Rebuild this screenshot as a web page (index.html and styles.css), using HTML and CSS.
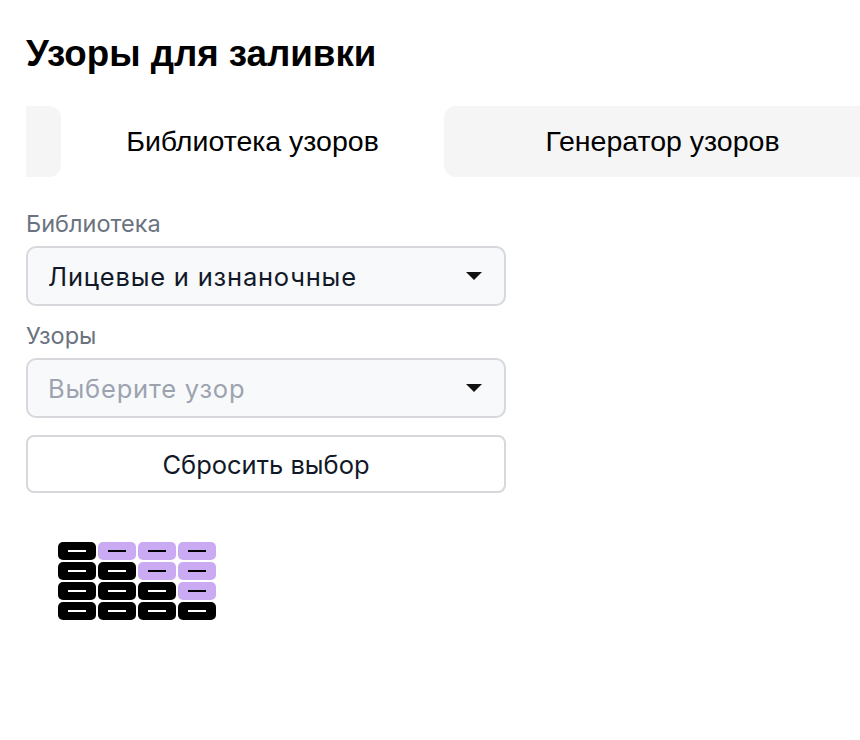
FILE: index.html
```html
<!DOCTYPE html>
<html lang="ru">
<head>
<meta charset="utf-8">
<title>Узоры для заливки</title>
<link rel="stylesheet" href="styles.css">
</head>
<body>
<div class="page">
  <h1 class="title">Узоры для заливки</h1>
  <div class="tabs">
    <div class="tab-spacer"></div>
    <div class="tab tab-active">Библиотека узоров</div>
    <div class="tab tab-inactive">Генератор узоров</div>
  </div>
  <div class="form">
    <div class="field">
      <div class="label">Библиотека</div>
      <div class="select">
        <span class="select-value">Лицевые и изнаночные</span>
        <span class="caret"></span>
      </div>
    </div>
    <div class="field">
      <div class="label">Узоры</div>
      <div class="select">
        <span class="select-value placeholder">Выберите узор</span>
        <span class="caret"></span>
      </div>
    </div>
    <button class="reset">Сбросить выбор</button>
  </div>
  <div class="pattern">
    <div class="cell k"></div><div class="cell p"></div><div class="cell p"></div><div class="cell p"></div>
    <div class="cell k"></div><div class="cell k"></div><div class="cell p"></div><div class="cell p"></div>
    <div class="cell k"></div><div class="cell k"></div><div class="cell k"></div><div class="cell p"></div>
    <div class="cell k"></div><div class="cell k"></div><div class="cell k"></div><div class="cell k"></div>
  </div>
</div>
</body>
</html>
```

FILE: styles.css
```css
html, body {
  margin: 0;
  padding: 0;
  background: #ffffff;
  overflow: hidden;
}
body {
  font-family: "Liberation Sans", Arial, sans-serif;
  color: #000;
}
.page {
  padding: 32px 0 0 26px;
}
.title {
  margin: 0;
  font-size: 36.7px;
  line-height: 44px;
  font-weight: bold;
  color: #000;
}
.tabs {
  margin-top: 30px;
  display: flex;
  width: 855px;
  height: 71px;
}
.tab-spacer {
  width: 35px;
  background: #f5f5f5;
  border-radius: 0 12px 12px 0;
}
.tab {
  display: flex;
  align-items: center;
  justify-content: center;
  font-size: 28.5px;
  color: #000;
}
.tab-active {
  width: 383px;
  background: #fff;
  border-radius: 12px 12px 0 0;
}
.tab-inactive {
  width: 437px;
  background: #f5f5f5;
  border-radius: 12px 0 0 12px;
}
.form {
  width: 480px;
  padding-top: 33px;
  display: flex;
  flex-direction: column;
  font-family: Inter, "Liberation Sans", sans-serif;
}
.field {
  display: flex;
  flex-direction: column;
}
.label {
  font-size: 23.5px;
  line-height: 28px;
  color: #6b7280;
  margin-bottom: 8px;
}
.field + .field {
  margin-top: 16px;
}
.select {
  box-sizing: border-box;
  height: 60px;
  border: 2px solid #d6d8dc;
  border-radius: 10px;
  background: #f8f9fb;
  display: flex;
  align-items: center;
  justify-content: space-between;
  padding: 0 22px 0 20px;
}
.select-value {
  font-size: 25.5px;
  letter-spacing: 0.8px;
  color: #111827;
}
.select-value.placeholder {
  color: #9ca3af;
}
.caret {
  width: 0;
  height: 0;
  border-left: 8px solid transparent;
  border-right: 8px solid transparent;
  border-top: 8px solid #111;
}
.reset {
  margin-top: 17px;
  box-sizing: border-box;
  height: 58px;
  border: 2px solid #d6d8dc;
  border-radius: 8px;
  background: #fff;
  font-family: inherit;
  font-size: 25.5px;
  color: #111827;
  padding: 0;
}
.pattern {
  margin: 49px 0 0 32px;
  display: grid;
  grid-template-columns: repeat(4, 38px);
  grid-auto-rows: 18px;
  gap: 2px;
}
.cell {
  border-radius: 5px;
  display: flex;
  align-items: center;
  justify-content: center;
}
.cell::after {
  content: "";
  width: 18px;
  height: 2px;
}
.cell.k {
  background: #000;
}
.cell.k::after {
  background: #fff;
}
.cell.p {
  background: #c9aaf3;
}
.cell.p::after {
  background: #000;
}
```
